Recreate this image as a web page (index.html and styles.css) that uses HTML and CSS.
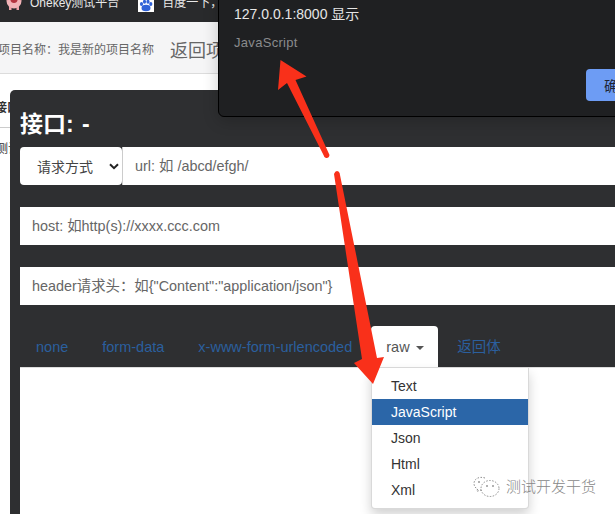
FILE: index.html
```html
<!DOCTYPE html>
<html lang="zh">

<head>
    <meta charset="UTF-8">
    <title>Onekey测试平台</title>
    <link rel="stylesheet" href="styles.css">
</head>

<body>
    <!-- 书签栏 -->
    <div class="bookmarks">
        <a class="bookmark">
            <svg class="pig" width="16" height="14" viewBox="0 0 16 14">
                <circle cx="8" cy="4" r="7.5" fill="#f2b4b8"/>
                <path d="M1 -1 L4 1 L1 4Z M15 -1 L12 1 L15 4Z" fill="#ea8f98"/>
                <ellipse cx="8" cy="2" rx="3.6" ry="4" fill="#b3343f"/>
                <path d="M3 10h2.500v3h-2.500z M10.500 10h2.500v3h-2.500z" fill="#eea4aa"/>
            </svg>
            Onekey测试平台
        </a>
        <a class="bookmark bookmark-baidu">
            <svg class="paw" width="16" height="12" viewBox="0 0 16 12">
                <rect width="16" height="12" fill="#fff"/>
                <ellipse cx="8" cy="8" rx="4.500" ry="3.200" fill="#2f62d8"/>
                <ellipse cx="3.500" cy="4" rx="1.600" ry="2" fill="#2f62d8"/>
                <ellipse cx="6.500" cy="1.800" rx="1.600" ry="2" fill="#2f62d8"/>
                <ellipse cx="10" cy="1.800" rx="1.600" ry="2" fill="#2f62d8"/>
                <ellipse cx="12.800" cy="4" rx="1.600" ry="2" fill="#2f62d8"/>
            </svg>
            百度一下，
        </a>
    </div>

    <!-- 页面本身 -->
    <div class="subnav">
        <span class="project">项目名称：我是新的项目名称</span>
        <span class="back">返回项目</span>
    </div>
    <div class="page">
        <div class="page-tab">接口</div>
        <div class="page-row">测试</div>
    </div>

    <!-- 接口弹窗 -->
    <div class="modal">
        <h2 class="modal-title">接口: -</h2>
        <div class="url-row">
            <div class="method">
                <span>请求方式</span>
                <svg width="10" height="7" viewBox="0 0 10 7">
                    <path d="M1 1.200 L5 5.200 L9 1.200" fill="none" stroke="#222" stroke-width="2"/>
                </svg>
            </div>
            <input class="field field-url" placeholder="url: 如 /abcd/efgh/">
        </div>
        <input class="field" placeholder="host: 如http(s)://xxxx.ccc.com">
        <input class="field" placeholder='header请求头：如{"Content":"application/json"}'>
        <ul class="tabs">
            <li>none</li>
            <li>form-data</li>
            <li>x-www-form-urlencoded</li>
            <li class="active">raw <i class="caret"></i></li>
            <li>返回体</li>
        </ul>
        <div class="editor"></div>
    </div>

    <ul class="menu">
        <li>Text</li>
        <li class="selected">JavaScript</li>
        <li>Json</li>
        <li>Html</li>
        <li>Xml</li>
    </ul>

    <!-- 浏览器 alert -->
    <div class="alert">
        <div class="alert-title">127.0.0.1:8000 显示</div>
        <div class="alert-text">JavaScript</div>
        <div class="alert-actions"><button class="alert-ok">确定</button></div>
    </div>

    <!-- 标注箭头 -->
    <svg class="arrows" width="615" height="514" viewBox="0 0 615 514">
        <path d="M280.500 60 L306.500 76.500 L295.500 80 L329.500 155 Q329 158.500 326 158 Q324 157.500 323.500 155 L287 83 L278 90Z" fill="#f9301a"/>
        <path d="M334 174 Q335.500 170 338.500 171.500 Q340 172.500 340 175 L377 358 L384 357 L373 384 L354 363 L362 359Z" fill="#f9301a"/>
    </svg>

    <!-- 公众号水印 -->
    <div class="watermark">
        <svg width="27" height="22" viewBox="0 0 27 22">
            <g fill="none" stroke="#8c8c8c" stroke-width="1" stroke-dasharray="1.500 1.500">
                <path d="M12 2 C6 0 1 3 1 7.500 C1 10 2.500 12 4.500 13 L4 15.500 L7 14 C8 14.300 9 14.400 10 14.400"/>
                <ellipse cx="17" cy="12.500" rx="9" ry="8"/>
            </g>
            <circle cx="6" cy="6" r="1" fill="#999"/>
            <circle cx="14" cy="10" r="1" fill="#999"/>
            <circle cx="20" cy="10" r="1" fill="#999"/>
        </svg>
        <span>测试开发干货</span>
    </div>
</body>

</html>
```

FILE: styles.css
```css
* {
    margin: 0;
    padding: 0;
    box-sizing: border-box;
}

html,
body {
    width: 615px;
    height: 514px;
    overflow: hidden;
}

body {
    position: relative;
    background-color: #fff;
    font-family: "Liberation Sans", "Noto Sans CJK SC", sans-serif;
    font-size: 14px;
    color: #333;
}

ul {
    list-style: none;
}

/* 书签栏 */
.bookmarks {
    display: flex;
    height: 22px;
    padding-left: 6px;
    background-color: #292a2c;
    overflow: hidden;
}

.bookmark {
    display: flex;
    align-items: flex-start;
    gap: 8px;
    height: 14px;
    margin-top: -5px;
    line-height: 16px;
    font-size: 12px;
    color: #e8e8e8;
}

.pig {
    flex: none;
    margin-top: 2px;
}

.bookmark-baidu {
    margin-left: 19px;
}

.paw {
    flex: none;
    margin-top: 5px;
}

/* 页面 */
.subnav {
    display: flex;
    align-items: center;
    height: 52px;
    border-bottom: 1px solid #dcdcdc;
    background-color: #f5f5f6;
    padding-top: 2px;
    color: #666;
    white-space: nowrap;
}

.project {
    margin-left: -2px;
    font-size: 12px;
}

.back {
    margin-left: 16px;
    font-size: 18px;
}

.page {
    padding-top: 25px;
    font-size: 12px;
}

.page-tab {
    height: 29px;
    margin-left: -5px;
    border-bottom: 1px solid #ccc;
    line-height: 18px;
    font-weight: bold;
}

.page-row {
    margin-left: -4px;
    padding-top: 11px;
}

/* 弹窗 */
.modal {
    position: absolute;
    left: 10px;
    top: 90px;
    width: 640px;
    height: 440px;
    display: flex;
    flex-direction: column;
    padding: 0 10px;
    border-radius: 5px 5px 0 0;
    background-color: #2e2f31;
}

.modal-title {
    height: 57px;
    line-height: 68px;
    font-size: 23px;
    word-spacing: 2px;
    color: #fff;
}

.url-row {
    display: flex;
}

.method {
    flex: none;
    display: flex;
    align-items: center;
    justify-content: space-between;
    width: 102px;
    height: 38px;
    padding: 0 3px 0 17px;
    border-radius: 4px;
    background-color: #fff;
    color: #444;
}

.field {
    display: block;
    width: 100%;
    height: 38px;
    padding: 0 12px;
    border: 0;
    background-color: #fff;
    font: inherit;
    font-size: 14.4px;
    outline: none;
}

.field + .field,
.url-row + .field {
    margin-top: 22px;
}

.field-url {
    flex: 1;
    border-left: 1px solid #ccc;
}

.field::placeholder {
    color: #666;
    opacity: 1;
}

.tabs {
    display: flex;
    height: 41px;
    margin-top: 21px;
    padding-left: 1px;
    line-height: 42px;
    font-size: 14.5px;
    color: #2b5f9e;
}

.tabs li {
    padding: 0 15px;
    margin-right: 4px;
}

.tabs .active {
    width: 67px;
    padding-right: 0;
    border-radius: 4px 4px 0 0;
    background-color: #fff;
    color: #555;
}

.caret {
    display: inline-block;
    margin-left: 2px;
    vertical-align: 2px;
    border-top: 4px solid #555;
    border-left: 4px solid transparent;
    border-right: 4px solid transparent;
}

.editor {
    flex: 1;
    border-top: 1px solid #ddd;
    background-color: #fff;
}

/* 下拉菜单 */
.menu {
    position: absolute;
    left: 371px;
    top: 368px;
    width: 158px;
    padding: 5px 0;
    border-radius: 0 0 4px 4px;
    border: 1px solid rgba(0, 0, 0, .15);
    border-top: 0;
    background-color: #fff;
    box-shadow: 0 6px 12px rgba(0, 0, 0, .18);
    color: #333;
}

.menu li {
    height: 26px;
    padding: 3px 19px;
    line-height: 20px;
}

.menu .selected {
    background-color: #2b66a8;
    color: #fff;
}

/* alert */
.alert {
    position: absolute;
    left: 218px;
    top: -20px;
    width: 420px;
    height: 137px;
    padding: 25px 15px 0;
    border: 1px solid #000;
    border-radius: 6px;
    background-color: #1f2022;
    box-shadow: 0 4px 16px rgba(0, 0, 0, .2);
}

.alert-title {
    line-height: 16px;
    color: #e6e6e6;
}

.alert-text {
    margin-top: 13px;
    line-height: 16px;
    font-size: 13px;
    letter-spacing: .3px;
    color: #8a8b8d;
}

.alert-actions {
    margin-top: 18px;
    padding-left: 352px;
}

.alert-ok {
    display: block;
    width: 70px;
    height: 32px;
    padding-left: 18px;
    border: 0;
    border-radius: 4px;
    background-color: #6d9cf4;
    text-align: left;
    font: inherit;
    color: #1d2433;
}

/* 箭头和水印 */
.arrows {
    position: absolute;
    left: 0;
    top: 0;
}

.watermark {
    position: absolute;
    left: 473px;
    top: 476px;
    display: flex;
    align-items: center;
    gap: 6px;
    font-size: 15px;
    font-weight: 300;
    line-height: 22px;
    color: #888;
}
```
